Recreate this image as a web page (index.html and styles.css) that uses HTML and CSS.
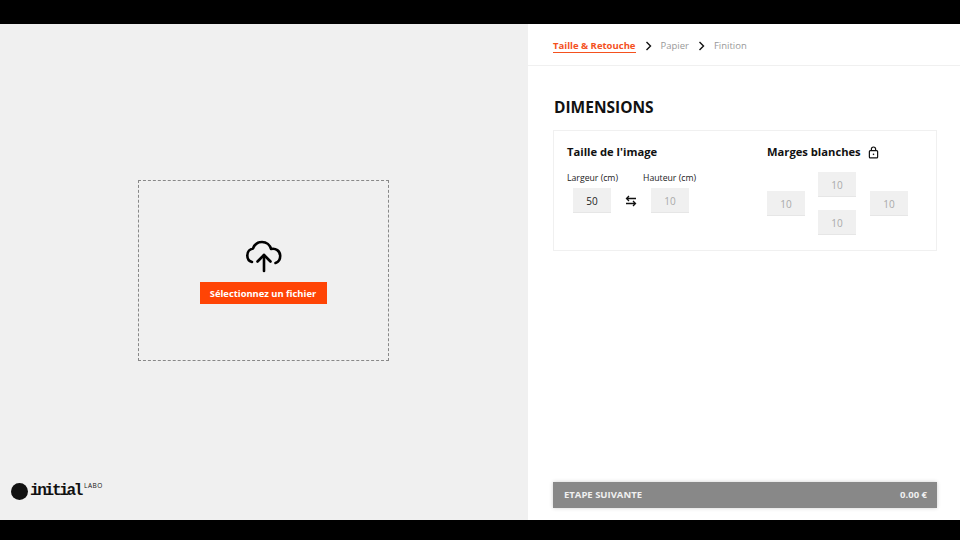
FILE: index.html
```html
<!DOCTYPE html>
<html lang="fr">
<head>
  <meta charset="UTF-8">
  <title>Initial Labo</title>
  <link rel="stylesheet" href="styles.css">
</head>
<body>
  <div class="app">
    <section class="upload-panel">
      <div class="dropzone">
        <svg class="cloud-icon" viewBox="0 0 36 34" width="36" height="34" fill="none" stroke="#000" stroke-width="2.6" stroke-linecap="round" stroke-linejoin="round">
          <path d="M6 22C2.500 21 1.300 18 1.300 15.500 1.300 11.500 4 9 7 8.500 8.500 4.500 12 2 16 2 20.500 2 24 5 25 9 29.500 8 34.200 10.500 34.200 16 34.200 19.500 32.500 22 29.500 23"/>
          <path d="M18 31V15"/>
          <path d="M11.500 21.500 18 15l6.500 6.500"/>
        </svg>
        <button class="file-btn">Sélectionnez un fichier</button>
      </div>
      <div class="logo">
        <span class="logo-dot"></span>
        <span class="logo-name">initial</span>
        <span class="logo-labo">LABO</span>
      </div>
    </section>

    <section class="options-panel">
      <nav class="steps">
        <span class="step active">Taille &amp; Retouche</span>
        <svg class="chevron" viewBox="0 0 8 10" width="8" height="10"><path d="M1.500 1 5.500 5l-4 4" fill="none" stroke="#111" stroke-width="1.400"/></svg>
        <span class="step">Papier</span>
        <svg class="chevron" viewBox="0 0 8 10" width="8" height="10"><path d="M1.500 1 5.500 5l-4 4" fill="none" stroke="#111" stroke-width="1.400"/></svg>
        <span class="step">Finition</span>
      </nav>

      <div class="options-body">
        <h1>DIMENSIONS</h1>
        <div class="card">
          <div class="image-size">
            <h2>Taille de l'image</h2>
            <div class="size-row">
              <div class="size-field">
                <label>Largeur (cm)</label>
                <div class="num-box value">50</div>
              </div>
              <svg class="swap-icon" viewBox="0 0 12 12" width="12" height="12" fill="none" stroke="#111" stroke-width="1.300">
                <path d="M11 3.500H1.500M4 1 1.500 3.500 4 6"/>
                <path d="M1 8.500h9.500M8 6l2.500 2.500L8 11"/>
              </svg>
              <div class="size-field">
                <label>Hauteur (cm)</label>
                <div class="num-box">10</div>
              </div>
            </div>
          </div>
          <div class="margins">
            <h2>Marges blanches
              <svg class="lock-icon" viewBox="0 0 12 14" width="11" height="13" fill="none" stroke="#111" stroke-width="1.300">
                <rect x="1.500" y="5" width="9" height="7.800" rx="1"/>
                <path d="M3.700 5V3.300a2.300 2.300 0 0 1 4.600 0V5"/>
                <circle cx="6" cy="9" r=".9" fill="#111" stroke="none"/>
              </svg>
            </h2>
            <div class="margin-grid">
              <div class="num-box left">10</div>
              <div class="num-box top">10</div>
              <div class="num-box bottom">10</div>
              <div class="num-box right">10</div>
            </div>
          </div>
        </div>
      </div>

      <div class="next-bar">
        <span>ETAPE SUIVANTE</span>
        <span>0.00 €</span>
      </div>
    </section>
  </div>
</body>
</html>
```

FILE: styles.css
```css
* {
  box-sizing: border-box;
}

body {
  margin: 0;
  background: #000;
  font-family: "Open Sans", Arial, sans-serif;
  color: #111;
}

.app {
  display: flex;
  width: 960px;
  height: 496px;
  margin-top: 24px;
}

/* left side */
.upload-panel {
  position: relative;
  width: 528px;
  background: #f0f0f0;
  padding: 156px 0 0 138px;
}

.dropzone {
  width: 251px;
  height: 181px;
  border: 1px dashed #888;
  display: flex;
  flex-direction: column;
  align-items: center;
  padding-top: 59px;
}

.cloud-icon {
  display: block;
}

.file-btn {
  width: 127px;
  height: 22px;
  margin-top: 8px;
  margin-left: -1px;
  padding: 0;
  background: #ff4405;
  color: #fff;
  font-family: inherit;
  font-size: 9.400px;
  font-weight: 700;
  border: none;
  border-radius: 0;
}

.logo {
  position: absolute;
  left: 11px;
  top: 456px;
  display: flex;
  align-items: center;
  height: 22px;
}

.logo-dot {
  width: 17px;
  height: 17px;
  border-radius: 50%;
  background: #111;
  margin-right: 2px;
}

.logo-name {
  font-family: "Liberation Mono", monospace;
  font-size: 16px;
  font-weight: 700;
  letter-spacing: -2.300px;
  width: 53px;
}

.logo-labo {
  align-self: flex-start;
  font-size: 6.500px;
  margin: 1px 0 0 1px;
  letter-spacing: .5px;
}

/* right side */
.options-panel {
  flex: 1;
  display: flex;
  flex-direction: column;
  background: #fff;
}

.steps {
  display: flex;
  align-items: center;
  height: 42px;
  padding: 2px 0 0 25px;
  border-bottom: 1px solid #f0f0f0;
  font-size: 9.500px;
}

.step {
  color: #999;
}

.step.active {
  color: #f4511e;
  font-weight: 700;
  border-bottom: 1px solid #f4511e;
  line-height: 13px;
}

.chevron {
  margin: 0 8px 0 9px;
}

.options-body {
  flex: 1;
  padding: 0 23px 0 25px;
}

h1 {
  margin: 30px 0 12px 1px;
  font-size: 15.500px;
  line-height: 22px;
  font-weight: 700;
  color: #111;
}

.card {
  display: flex;
  height: 121px;
  border: 1px solid #f0f0f0;
  padding: 12px 0 0 13px;
}

h2 {
  margin: 0;
  font-size: 11.200px;
  line-height: 17px;
  font-weight: 700;
}

.image-size {
  width: 200px;
}

.size-row {
  display: flex;
  align-items: flex-end;
  margin-top: 12px;
}

.size-field {
  width: 52px;
}

.size-field label {
  display: block;
  font-size: 8.700px;
  line-height: 12px;
  margin-bottom: 4px;
  color: #222;
  white-space: nowrap;
}

.size-field:first-child .num-box {
  margin-left: 6px;
}

.size-field:last-child .num-box {
  margin-left: 8px;
}

.swap-icon {
  margin: 0 6px 6px;
}

.num-box {
  width: 38px;
  height: 25px;
  background: #f0f0f0;
  border-bottom: 1px solid #e6e6e6;
  color: #aaa;
  font-size: 10px;
  line-height: 26px;
  text-align: center;
}

.num-box.value {
  color: #222;
}

.lock-icon {
  vertical-align: -3px;
  margin-left: 4px;
}

.margin-grid {
  display: grid;
  grid-template-columns: 38px 38px 38px;
  grid-template-rows: 25px 13px 25px;
  column-gap: 13px;
  margin-top: 12px;
}

.num-box.top {
  grid-column: 2;
  grid-row: 1;
}

.num-box.bottom {
  grid-column: 2;
  grid-row: 3;
}

.num-box.left {
  grid-column: 1;
  grid-row: 1 / 4;
  align-self: center;
}

.num-box.right {
  grid-column: 3;
  grid-row: 1 / 4;
  align-self: center;
  margin-left: 1px;
}

.next-bar {
  display: flex;
  justify-content: space-between;
  align-items: center;
  width: 384px;
  height: 26px;
  margin: 0 0 12px 25px;
  padding: 0 10px 2px 11px;
  background: #888;
  color: #f0f0f0;
  font-size: 9.500px;
  font-weight: 700;
  box-shadow: 0 0 4px rgba(0, 0, 0, .2);
}
```
